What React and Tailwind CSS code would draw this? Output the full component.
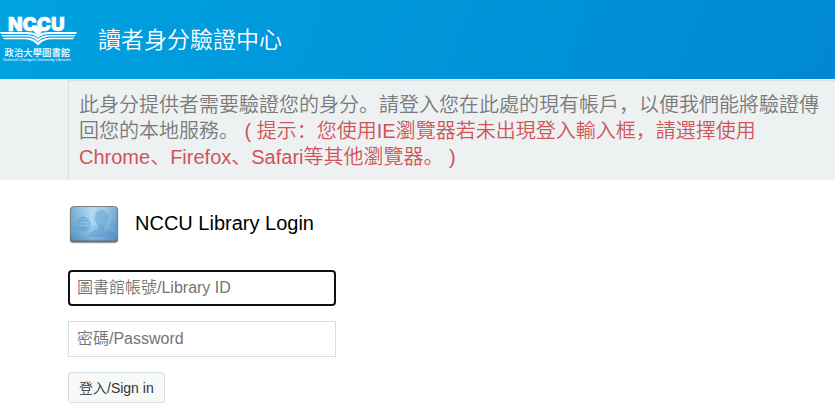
import React, { useState } from "react";

function LibraryLogo() {
  return (
    <svg viewBox="0 -4 78 59" className="w-[78px] h-[59px] shrink-0" fill="#fff" role="img" aria-label="NCCU Libraries">
      <text x="8" y="16.500" fontSize="19" fontWeight="900" stroke="#fff" strokeWidth="0.5" fontFamily="Inter, 'Liberation Sans', sans-serif">NCCU</text>
      {/* open book */}
      <path d="M0 18H25C31 18 35.500 18.500 38 21.500C40.500 18.500 45 18 51 18H77L76 19.900H52C45 19.900 41 20.800 38 24C35 20.800 31 19.900 24 19.900H1Z" />
      <path d="M1.500 21H24C31 21 35 22 38 25C41 22 45 21 52 21H75.500L74.500 22.600H52C45 22.600 41 24 38 27.500C35 24 31 22.600 24 22.600H2.500Z" />
      <path d="M3 23.800H24C31 23.800 35 25 38 28.500C41 25 45 23.800 52 23.800H74L73 25.200H53C46 25.200 42 27 38 31.500C34 27 30 25.200 23 25.200H4Z" />
      <path d="M36 11L38 13L40 11L43 16.500L38 21.500L33 16.500Z" />
      <text x="4.500" y="41.500" fontSize="9.400" fontWeight="500" fontFamily="'Noto Sans CJK TC', sans-serif">政治大學圖書館</text>
      <text x="3" y="47" fontSize="4" fontFamily="'Liberation Sans', sans-serif">National Chengchi University Libraries</text>
    </svg>
  );
}

function IdCardIcon() {
  return (
    <svg viewBox="-1 0 51 40" className="w-[51px] h-10 shrink-0" aria-hidden="true">
      <defs>
        <linearGradient id="card" x1="0" y1="0" x2="1" y2="0">
          <stop offset="0" stopColor="#5a9bc8" />
          <stop offset="0.45" stopColor="#a2d2f1" />
          <stop offset="0.75" stopColor="#86bde3" />
          <stop offset="1" stopColor="#5795c2" />
        </linearGradient>
        <linearGradient id="shade" x1="0" y1="0" x2="0" y2="1">
          <stop offset="0" stopColor="#fff" stopOpacity="0.2" />
          <stop offset="0.55" stopColor="#fff" stopOpacity="0.1" />
          <stop offset="1" stopColor="#2f78ae" stopOpacity="0.3" />
        </linearGradient>
      </defs>
      <rect x="0.500" y="4" width="49" height="35.500" rx="4" fill="#000" opacity="0.15" />
      <rect x="1" y="3" width="48" height="35.500" rx="3.500" fill="#56636d" />
      <rect x="2" y="3" width="46" height="33.500" rx="2.500" fill="url(#card)" />
      <rect x="2" y="3" width="46" height="33.500" rx="2.500" fill="url(#shade)" />
      <path d="M2 22C17 23 34 22 48 18V34Q48 36.500 46 36.500H4Q2 36.500 2 34Z" fill="#3784bc" opacity="0.18" />
      <path d="M26 13C26 8.500 28.500 6 32 6S39 8.500 39 13C40 14 39.500 16.500 38.500 17C38 19.500 37 21 35.500 22V25C40 26 45 27 46 30V33H20C20 29 24 27 29.500 25V22C28 21 27.500 19.500 26.500 17C25 16.500 25 14 26 13Z" fill="#4489bd" opacity="0.32" />
      <g fill="none" stroke="#5c9ccb" strokeWidth="0.8" opacity="0.85">
        <circle cx="14" cy="20" r="6.800" />
        <ellipse cx="14" cy="20" rx="3.200" ry="6.800" />
        <path d="M14 13V27M7.200 20H20.800M8.500 16.500H19.500M8.500 23.500H19.500" />
      </g>
      <rect x="1.500" y="2.500" width="47" height="34.500" rx="3" fill="none" stroke="#75828c" strokeWidth="1" />
    </svg>
  );
}

export default function App() {
  const [account, setAccount] = useState("");
  const [password, setPassword] = useState("");

  const handleSubmit = (e) => {
    e.preventDefault();
  };

  return (
    <div className="min-h-screen bg-white font-['Liberation_Sans','Noto_Sans_CJK_SC',sans-serif]">
      <header className="flex items-center gap-5 h-[79px] bg-linear-110 from-[#00a2e0] to-[#0088d3] text-white">
        <LibraryLogo />
        <h1 className="text-[23px] leading-8 font-[350]">讀者身分驗證中心</h1>
      </header>

      <section className="bg-[#edf1f2] pt-px pl-[68px]">
        <p className="border-t border-l border-[#d7e0e0] pt-[11px] pb-[10px] pl-[10px] pr-1 text-[20px] leading-[26px] font-[350] text-[#7a7a7a]">
          此身分提供者需要驗證您的身分。請登入您在此處的現有帳戶，以便我們能將驗證傳回您的本地服務。
          <span className="text-[#cf5558]"> ( 提示：您使用IE瀏覽器若未出現登入輸入框，請選擇使用Chrome、Firefox、Safari等其他瀏覽器。 )</span>
        </p>
      </section>

      <main className="pl-[68px] pr-4 pt-6">
        <div className="flex items-center gap-4">
          <IdCardIcon />
          <h2 className="pb-0.5 text-[20px] leading-6 text-black">NCCU Library Login</h2>
        </div>

        <form onSubmit={handleSubmit} className="mt-[26px] flex flex-col items-start gap-[15px]">
          <input
            type="text"
            aria-label="圖書館帳號/Library ID"
            placeholder="圖書館帳號/Library ID"
            autoFocus
            value={account}
            onChange={(e) => setAccount(e.target.value)}
            className="w-full max-w-[268px] h-9 px-2 border border-[#d7e0e0] text-base font-[350] placeholder:text-[#757575] focus:border-2 focus:border-[#101010] focus:rounded-[4px] focus:px-[7px] focus:outline-none"
          />
          <input
            type="password"
            aria-label="密碼/Password"
            placeholder="密碼/Password"
            value={password}
            onChange={(e) => setPassword(e.target.value)}
            className="w-full max-w-[268px] h-9 px-2 border border-[#d7e0e0] text-base font-[350] placeholder:text-[#757575] focus:border-2 focus:border-[#101010] focus:rounded-[4px] focus:px-[7px] focus:outline-none"
          />
          <button
            type="submit"
            className="h-[31px] px-[10px] rounded-[3px] border border-[#d7e0e0] bg-[#f7f9f9] text-sm font-[350] text-[#333] hover:bg-[#edf1f2]"
          >
            登入/Sign in
          </button>
        </form>
      </main>
    </div>
  );
}
